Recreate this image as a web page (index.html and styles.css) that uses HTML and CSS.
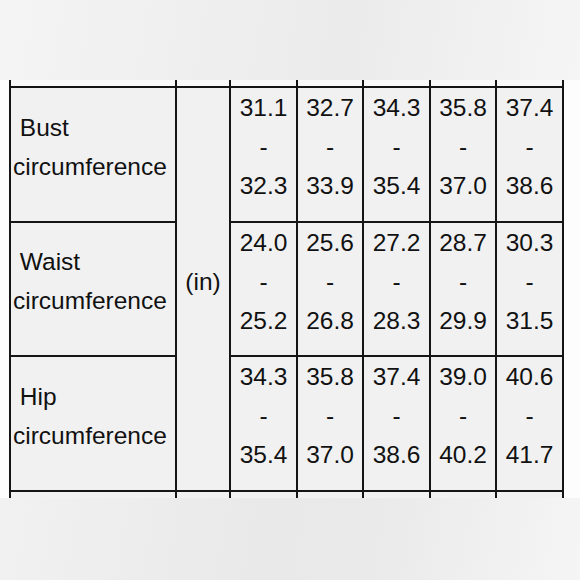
FILE: index.html
```html
<!DOCTYPE html>
<html>
<head>
<meta charset="utf-8">
<link rel="stylesheet" href="styles.css">
</head>
<body>
<div class="band"></div>
<div class="sheet">
  <table class="chart">
    <colgroup>
      <col class="c-label"><col class="c-unit"><col class="c-val"><col class="c-val2"><col class="c-val"><col class="c-val2"><col class="c-val">
    </colgroup>
    <tr class="stub-top"><td></td><td></td><td></td><td></td><td></td><td></td><td></td></tr>
    <tr class="row">
      <td class="label">&nbsp;Bust<br>circumference</td>
      <td class="unit" rowspan="3">(in)</td>
      <td class="val">31.1<br>-<br>32.3</td>
      <td class="val">32.7<br>-<br>33.9</td>
      <td class="val">34.3<br>-<br>35.4</td>
      <td class="val">35.8<br>-<br>37.0</td>
      <td class="val">37.4<br>-<br>38.6</td>
    </tr>
    <tr class="row">
      <td class="label">&nbsp;Waist<br>circumference</td>
      <td class="val">24.0<br>-<br>25.2</td>
      <td class="val">25.6<br>-<br>26.8</td>
      <td class="val">27.2<br>-<br>28.3</td>
      <td class="val">28.7<br>-<br>29.9</td>
      <td class="val">30.3<br>-<br>31.5</td>
    </tr>
    <tr class="row">
      <td class="label">&nbsp;Hip<br>circumference</td>
      <td class="val">34.3<br>-<br>35.4</td>
      <td class="val">35.8<br>-<br>37.0</td>
      <td class="val">37.4<br>-<br>38.6</td>
      <td class="val">39.0<br>-<br>40.2</td>
      <td class="val">40.6<br>-<br>41.7</td>
    </tr>
    <tr class="stub-bottom"><td></td><td></td><td></td><td></td><td></td><td></td><td></td></tr>
  </table>
</div>
<div class="band band-bottom"></div>
</body>
</html>
```

FILE: styles.css
```css
html, body {
  margin: 0;
  padding: 0;
}
body {
  width: 580px;
  height: 580px;
  overflow: hidden;
  background: #ececec;
  font-family: "Liberation Sans", Arial, sans-serif;
}
.band {
  height: 80px;
  background: linear-gradient(100deg, #f4f4f4 0%, #ededed 45%, #ebebeb 60%, #f5f5f5 100%);
}
.band-bottom {
  height: 82px;
  background: linear-gradient(100deg, #f1f1f1 0%, #e9e9e9 45%, #eaeaea 65%, #f5f5f5 100%);
}
.sheet {
  height: 418px;
  overflow: hidden;
  background: #fdfdfd;
  padding-left: 9px;
}
.chart {
  border-collapse: collapse;
  table-layout: fixed;
  width: 555px;
  margin-top: -12px;
  background: #f1f1f1;
  color: #111;
  font-size: 24.5px;
  line-height: 39px;
}
.c-label { width: 166px; }
.c-unit { width: 54px; }
.c-val { width: 67px; }
.c-val2 { width: 66px; }
.chart td {
  border: 2px solid #151515;
  padding: 0 0 15.7px;
  vertical-align: middle;
  text-align: center;
  white-space: nowrap;
}
.chart td.label {
  text-align: left;
  padding-left: 2px;
}
.stub-top td {
  height: 18px;
  padding: 0;
  border-top: 0;
  background: #fafafa;
}
.stub-bottom td {
  height: 30px;
  padding: 0;
}
```
